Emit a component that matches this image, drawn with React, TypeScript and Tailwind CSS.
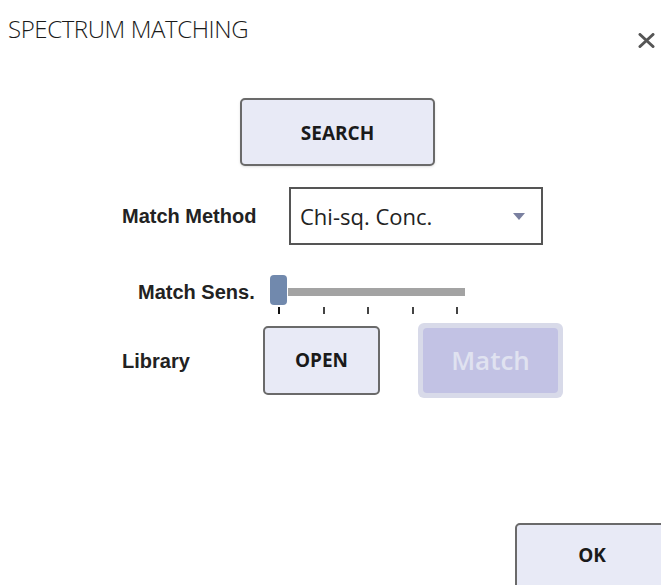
import React from 'react';

const ui = { fontFamily: '"Open Sans", "Noto Sans", sans-serif' };
const label = { fontFamily: '"Liberation Sans", Arial, sans-serif' };

const ticks = [0, 1, 2, 3, 4];

export default function App() {
  return (
    <div className="w-[661px] h-[585px] overflow-hidden bg-white flex flex-col [&>*]:shrink-0" style={ui}>
      {/* Header */}
      <div className="h-[98px] flex justify-between items-start">
        <h1 className="ml-[8px] mt-[11px] text-[24px] font-light text-[#1a1a1a] tracking-[-0.4px]">
          SPECTRUM MATCHING
        </h1>
        <button className="mt-[33px] mr-[6px]" aria-label="close">
          <svg width="17" height="15" viewBox="0 0 17 15">
            <path d="M2 1.5 L15 13.5 M15 1.5 L2 13.5" stroke="#555" strokeWidth="3" strokeLinecap="round" />
          </svg>
        </button>
      </div>

      {/* Search */}
      <button className="ml-[240px] w-[195px] h-[68px] rounded-[5px] border-2 border-[#6a6a6a] bg-[#e8eaf6] text-[19px] font-bold text-[#1a1a1a] shadow-sm pt-[2px]">
        SEARCH
      </button>

      {/* Match method */}
      <div className="mt-[21px] flex items-center">
        <span className="ml-[122px] w-[167px] text-[20px] font-bold text-[#222]" style={label}>
          Match Method
        </span>
        <div className="w-[254px] h-[58px] border-2 border-[#555] bg-white flex items-center justify-between pl-[9px] pr-[16px]">
          <span className="text-[22px] text-[#222]">Chi-sq. Conc.</span>
          <svg width="12" height="7" viewBox="0 0 12 7">
            <path d="M0 0 H12 L6 7 Z" fill="#7a80a0" />
          </svg>
        </div>
      </div>

      {/* Match sensitivity */}
      <div className="mt-[30px] flex items-start">
        <span className="ml-[138px] w-[132px] mt-[2px] text-[20px] font-bold text-[#222]" style={label}>
          Match Sens.
        </span>
        <div className="flex flex-col">
          <div className="h-[30px] flex items-center">
            <div className="w-[17px] h-[30px] rounded-[4px] bg-[#7189ad]" />
            <div className="ml-[1px] mt-[4px] w-[177px] h-[8px] bg-[#a3a3a3]" />
          </div>
          <div className="mt-[2px] w-[188px] pl-[8px] flex justify-between">
            {ticks.map((t) => (
              <div key={t} className={`w-[2px] h-[7px] ${t === 0 ? 'bg-[#111]' : 'bg-[#444]'}`} />
            ))}
          </div>
        </div>
      </div>

      {/* Library */}
      <div className="mt-[9px] flex items-center">
        <span className="ml-[122px] w-[141px] text-[20px] font-bold text-[#222]" style={label}>
          Library
        </span>
        <button className="w-[117px] h-[69px] rounded-[5px] border-2 border-[#6a6a6a] bg-[#e8eaf6] text-[19px] font-bold text-[#1a1a1a]">
          OPEN
        </button>
        <div className="ml-[38px] w-[145px] h-[75px] rounded-[6px] bg-[#d8dae9] p-[5px]">
          <div className="w-full h-full rounded-[4px] bg-[#c2c2e4] flex items-center justify-center text-[26px] font-semibold text-[#e0e2f0]">
            Match
          </div>
        </div>
      </div>

      {/* OK */}
      <div className="mt-[125px] flex">
        <button className="ml-[515px] w-[154px] h-[70px] shrink-0 rounded-[5px] border-2 border-[#6a6a6a] bg-[#e8eaf6] text-[19px] font-bold text-[#1a1a1a] pb-[6px]">
          OK
        </button>
      </div>
    </div>
  );
}
